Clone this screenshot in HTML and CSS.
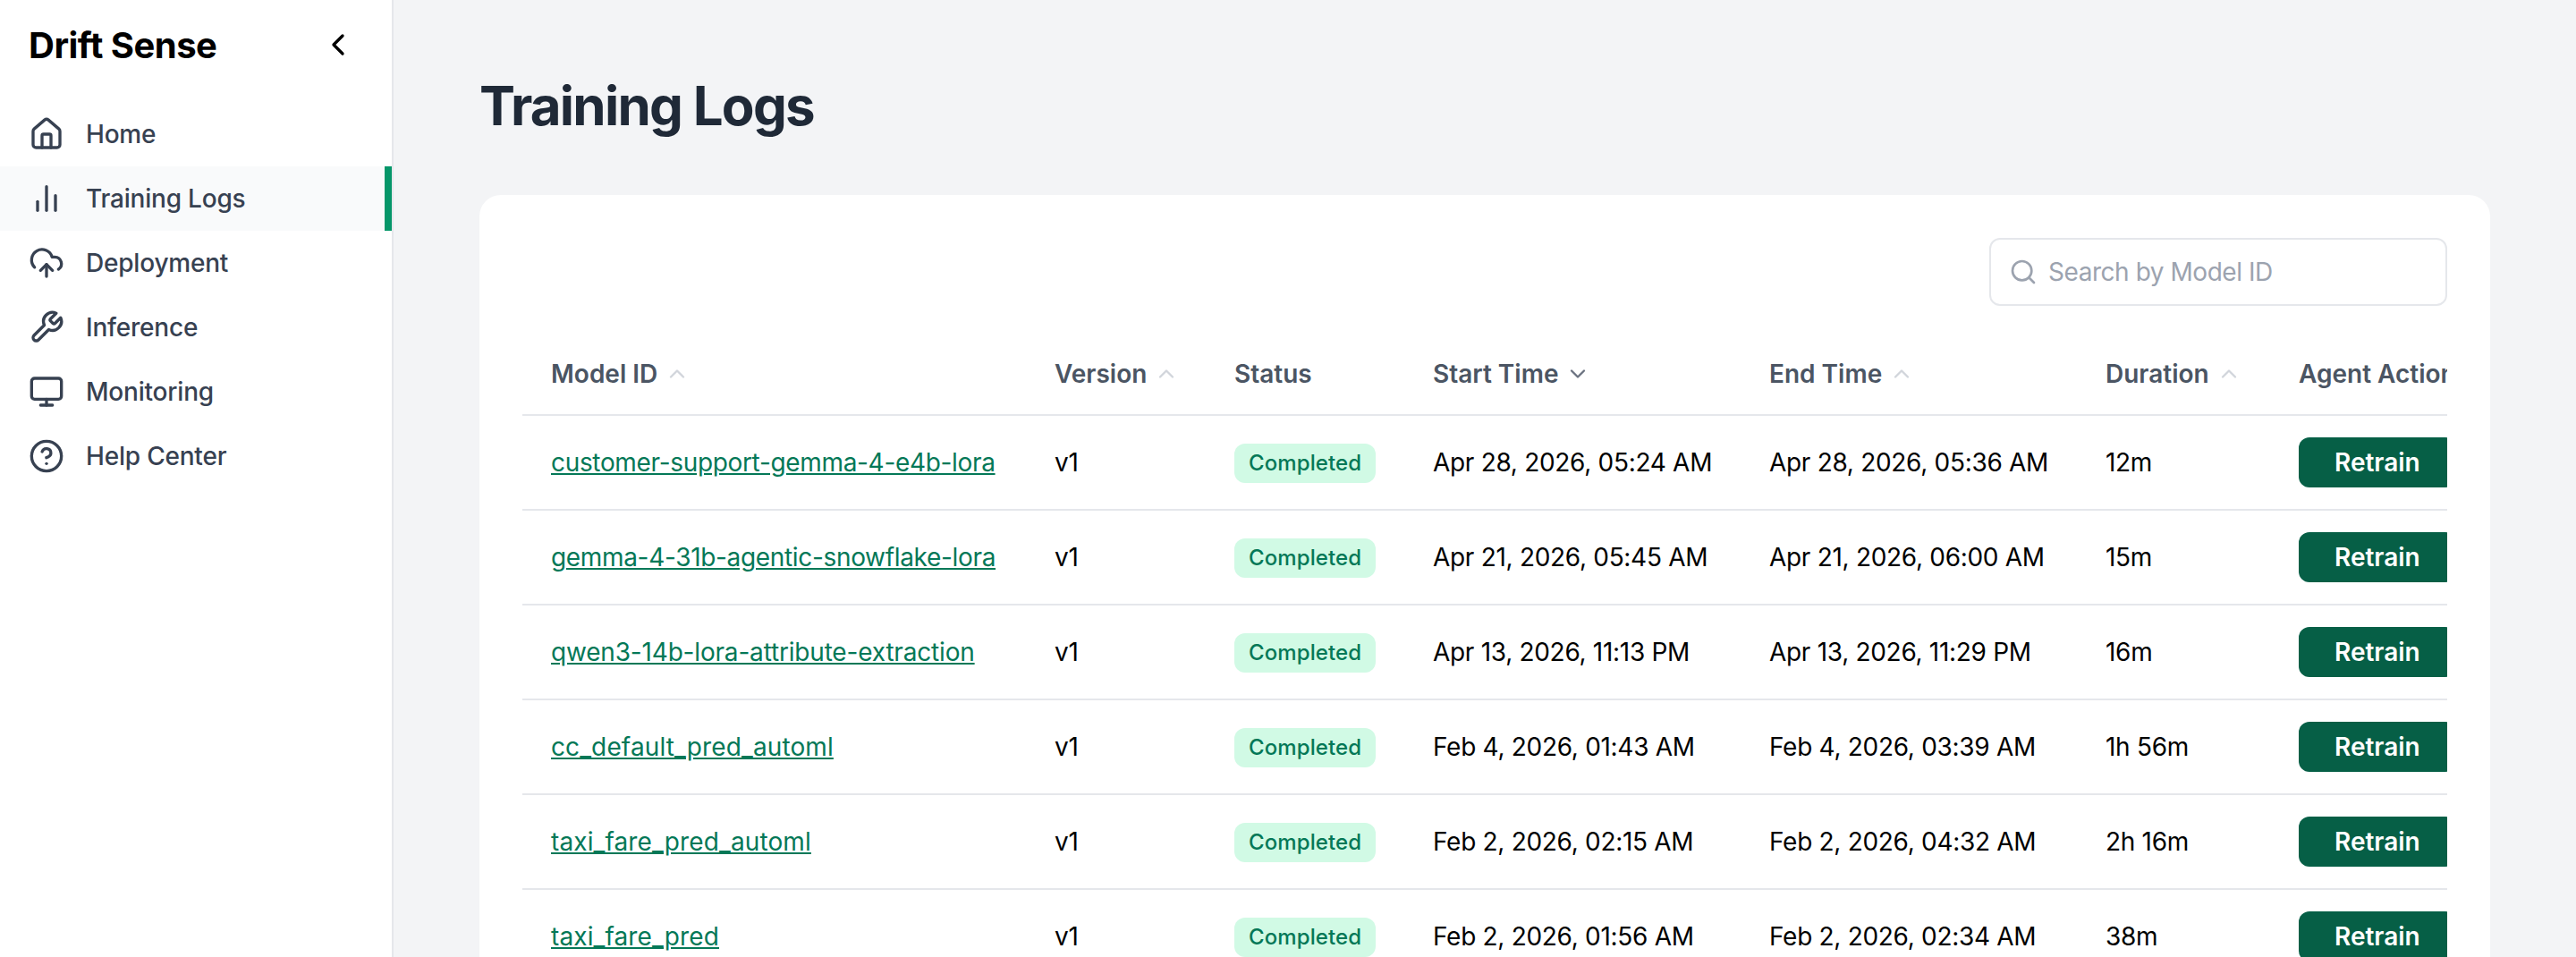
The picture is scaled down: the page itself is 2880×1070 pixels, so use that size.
FILE: index.html
```html
<!DOCTYPE html>
<html lang="en">
<head>
    <meta charset="UTF-8">
    <meta name="viewport" content="width=device-width, initial-scale=1.0">
    <title>Training Logs - Drift Sense</title>
    <link rel="stylesheet" href="styles.css">
</head>
<body>
    <aside class="sidebar">
        <div class="brand">
            <span class="brand-name">Drift Sense</span>
            <button class="collapse-button" aria-label="Collapse sidebar">
                <svg class="icon" viewBox="0 0 24 24"><path d="m15 18-6-6 6-6"/></svg>
            </button>
        </div>
        <nav class="nav">
            <a class="nav-item" href="#">
                <svg class="icon" viewBox="0 0 24 24"><path d="M15 21v-8a1 1 0 0 0-1-1h-4a1 1 0 0 0-1 1v8"/><path d="M3 10a2 2 0 0 1 .709-1.528l7-5.999a2 2 0 0 1 2.582 0l7 5.999A2 2 0 0 1 21 10v9a2 2 0 0 1-2 2H5a2 2 0 0 1-2-2z"/></svg>
                Home
            </a>
            <a class="nav-item active" href="#">
                <svg class="icon" viewBox="0 0 24 24"><path d="M18 20V10"/><path d="M12 20V4"/><path d="M6 20v-6"/></svg>
                Training Logs
            </a>
            <a class="nav-item" href="#">
                <svg class="icon" viewBox="0 0 24 24"><path d="M12 13v8"/><path d="M4 14.899A7 7 0 1 1 15.71 8h1.79a4.5 4.5 0 0 1 2.5 8.242"/><path d="m8 17 4-4 4 4"/></svg>
                Deployment
            </a>
            <a class="nav-item" href="#">
                <svg class="icon" viewBox="0 0 24 24"><path d="M14.7 6.3a1 1 0 0 0 0 1.4l1.6 1.6a1 1 0 0 0 1.4 0l3.77-3.77a6 6 0 0 1-7.94 7.94l-6.91 6.91a2.12 2.12 0 0 1-3-3l6.91-6.91a6 6 0 0 1 7.94-7.94l-3.76 3.76z"/></svg>
                Inference
            </a>
            <a class="nav-item" href="#">
                <svg class="icon" viewBox="0 0 24 24"><rect x="2" y="3" width="20" height="14" rx="2"/><path d="M8 21h8"/><path d="M12 17v4"/></svg>
                Monitoring
            </a>
            <a class="nav-item" href="#">
                <svg class="icon" viewBox="0 0 24 24"><circle cx="12" cy="12" r="10"/><path d="M9.09 9a3 3 0 0 1 5.83 1c0 2-3 3-3 3"/><path d="M12 17h.01"/></svg>
                Help Center
            </a>
        </nav>
    </aside>

    <main class="main">
        <h1 class="page-title">Training Logs</h1>

        <section class="card">
            <div class="toolbar">
                <label class="search">
                    <svg class="search-icon" viewBox="0 0 24 24"><circle cx="11" cy="11" r="8"/><path d="m21 21-4.3-4.3"/></svg>
                    <input class="search-input" type="text" placeholder="Search by Model ID">
                </label>
            </div>

            <div class="table-wrap">
                <table class="logs-table">
                    <colgroup>
                        <col class="col-model">
                        <col class="col-version">
                        <col class="col-status">
                        <col class="col-time">
                        <col class="col-time">
                        <col class="col-duration">
                        <col class="col-action">
                    </colgroup>
                    <thead>
                        <tr>
                            <th><span class="th-label">Model ID <svg class="sort" viewBox="0 0 24 24"><path d="m18 15-6-6-6 6"/></svg></span></th>
                            <th><span class="th-label">Version <svg class="sort" viewBox="0 0 24 24"><path d="m18 15-6-6-6 6"/></svg></span></th>
                            <th>Status</th>
                            <th><span class="th-label">Start Time <svg class="sort sorted" viewBox="0 0 24 24"><path d="m6 9 6 6 6-6"/></svg></span></th>
                            <th><span class="th-label">End Time <svg class="sort" viewBox="0 0 24 24"><path d="m18 15-6-6-6 6"/></svg></span></th>
                            <th><span class="th-label">Duration <svg class="sort" viewBox="0 0 24 24"><path d="m18 15-6-6-6 6"/></svg></span></th>
                            <th>Agent Action</th>
                        </tr>
                    </thead>
                    <tbody>
                        <tr>
                            <td><a class="model-link tight" href="#">customer-support-gemma-4-e4b-lora</a></td>
                            <td>v1</td>
                            <td><span class="badge">Completed</span></td>
                            <td>Apr 28, 2026, 05:24 AM</td>
                            <td>Apr 28, 2026, 05:36 AM</td>
                            <td>12m</td>
                            <td><button class="retrain">Retrain</button></td>
                        </tr>
                        <tr>
                            <td><a class="model-link tight" href="#">gemma-4-31b-agentic-snowflake-lora</a></td>
                            <td>v1</td>
                            <td><span class="badge">Completed</span></td>
                            <td>Apr 21, 2026, 05:45 AM</td>
                            <td>Apr 21, 2026, 06:00 AM</td>
                            <td>15m</td>
                            <td><button class="retrain">Retrain</button></td>
                        </tr>
                        <tr>
                            <td><a class="model-link snug" href="#">qwen3-14b-lora-attribute-extraction</a></td>
                            <td>v1</td>
                            <td><span class="badge">Completed</span></td>
                            <td>Apr 13, 2026, 11:13 PM</td>
                            <td>Apr 13, 2026, 11:29 PM</td>
                            <td>16m</td>
                            <td><button class="retrain">Retrain</button></td>
                        </tr>
                        <tr>
                            <td><a class="model-link" href="#">cc_default_pred_automl</a></td>
                            <td>v1</td>
                            <td><span class="badge">Completed</span></td>
                            <td>Feb 4, 2026, 01:43 AM</td>
                            <td>Feb 4, 2026, 03:39 AM</td>
                            <td>1h 56m</td>
                            <td><button class="retrain">Retrain</button></td>
                        </tr>
                        <tr>
                            <td><a class="model-link" href="#">taxi_fare_pred_automl</a></td>
                            <td>v1</td>
                            <td><span class="badge">Completed</span></td>
                            <td>Feb 2, 2026, 02:15 AM</td>
                            <td>Feb 2, 2026, 04:32 AM</td>
                            <td>2h 16m</td>
                            <td><button class="retrain">Retrain</button></td>
                        </tr>
                        <tr>
                            <td><a class="model-link" href="#">taxi_fare_pred</a></td>
                            <td>v1</td>
                            <td><span class="badge">Completed</span></td>
                            <td>Feb 2, 2026, 01:56 AM</td>
                            <td>Feb 2, 2026, 02:34 AM</td>
                            <td>38m</td>
                            <td><button class="retrain">Retrain</button></td>
                        </tr>
                    </tbody>
                </table>
            </div>
        </section>
    </main>
</body>
</html>
```

FILE: styles.css
```css
/* General styles */
* {
    box-sizing: border-box;
}

body {
    display: flex;
    height: 100vh;
    margin: 0;
    overflow: hidden;
    background-color: #f3f4f6;
    color: #000;
    font-family: Inter, "Liberation Sans", sans-serif;
    font-size: 28px;
}

.icon {
    flex: none;
    width: 40px;
    height: 40px;
    fill: none;
    stroke: currentColor;
    stroke-width: 2;
    stroke-linecap: round;
    stroke-linejoin: round;
}

/* Sidebar */
.sidebar {
    flex: none;
    width: 440px;
    background-color: #fff;
    border-right: 2px solid #e5e7eb;
}

.brand {
    display: flex;
    align-items: center;
    justify-content: space-between;
    height: 100px;
    padding: 0 32px;
    margin-bottom: 14px;
}

.brand-name {
    font-size: 40px;
    font-weight: 700;
    letter-spacing: -0.5px;
}

.collapse-button {
    display: flex;
    padding: 0;
    margin-right: 8px;
    background: none;
    border: none;
    color: #000;
}

.nav-item {
    display: flex;
    align-items: center;
    gap: 24px;
    height: 72px;
    padding: 0 32px;
    color: #374151;
    font-weight: 500;
    letter-spacing: -0.2px;
    text-decoration: none;
}

.nav-item.active {
    background-color: #f9fafb;
    border-right: 8px solid #059669;
}

/* Main area */
.main {
    flex: 1;
    min-width: 0;
    padding: 82px 96px 0;
}

.page-title {
    margin: 0 0 64px;
    color: #1f2937;
    font-size: 60px;
    font-weight: 700;
    line-height: 72px;
    letter-spacing: -1.75px;
}

.card {
    padding: 48px;
    background-color: #fff;
    border-radius: 24px;
}

.toolbar {
    display: flex;
    justify-content: flex-end;
    margin-bottom: 32px;
}

.search {
    display: flex;
    align-items: center;
    gap: 12px;
    width: 512px;
    height: 76px;
    padding: 0 20px;
    border: 2px solid #e5e7eb;
    border-radius: 12px;
}

.search-icon {
    flex: none;
    width: 32px;
    height: 32px;
    fill: none;
    stroke: #9ca3af;
    stroke-width: 2;
    stroke-linecap: round;
    stroke-linejoin: round;
}

.search-input {
    flex: 1;
    min-width: 0;
    padding: 0;
    border: none;
    outline: none;
    font: inherit;
    letter-spacing: -0.45px;
}

.search-input::placeholder {
    color: #9ca3af;
}

/* Table */
.table-wrap {
    overflow: hidden;
}

.logs-table {
    width: 2194px;
    table-layout: fixed;
    border-collapse: collapse;
}

.col-model {
    width: 563px;
}

.col-version {
    width: 201px;
}

.col-status {
    width: 222px;
}

.col-time {
    width: 376px;
}

.col-duration {
    width: 216px;
}

.col-action {
    width: 240px;
}

.logs-table th {
    padding: 24px 32px 25px;
    color: #4b5563;
    font-weight: 600;
    line-height: 40px;
    text-align: left;
    white-space: nowrap;
    border-bottom: 2px solid #e5e7eb;
}

.logs-table td {
    height: 106px;
    padding: 0 32px;
    letter-spacing: -0.3px;
    white-space: nowrap;
    border-bottom: 2px solid #e5e7eb;
}

.th-label {
    display: inline-flex;
    align-items: center;
    gap: 8px;
}

.sort {
    width: 28px;
    height: 28px;
    fill: none;
    stroke: #d1d5db;
    stroke-width: 2;
    stroke-linecap: round;
    stroke-linejoin: round;
}

.sort.sorted {
    stroke: #6b7280;
}

.model-link {
    color: #047857;
    letter-spacing: 0.12px;
}

.model-link.tight {
    letter-spacing: -0.33px;
}

.model-link.snug {
    letter-spacing: -0.18px;
}

.badge {
    display: inline-block;
    margin-top: 2px;
    padding: 0 16px;
    background-color: #d1fae5;
    border-radius: 12px;
    color: #047857;
    font-size: 24px;
    font-weight: 500;
    letter-spacing: 0.1px;
    line-height: 44px;
    vertical-align: middle;
}

.retrain {
    display: block;
    height: 56px;
    padding: 0 40px;
    background-color: #065f46;
    border: none;
    border-radius: 12px;
    color: #fff;
    font: inherit;
    font-weight: 600;
    letter-spacing: 0;
}
```
